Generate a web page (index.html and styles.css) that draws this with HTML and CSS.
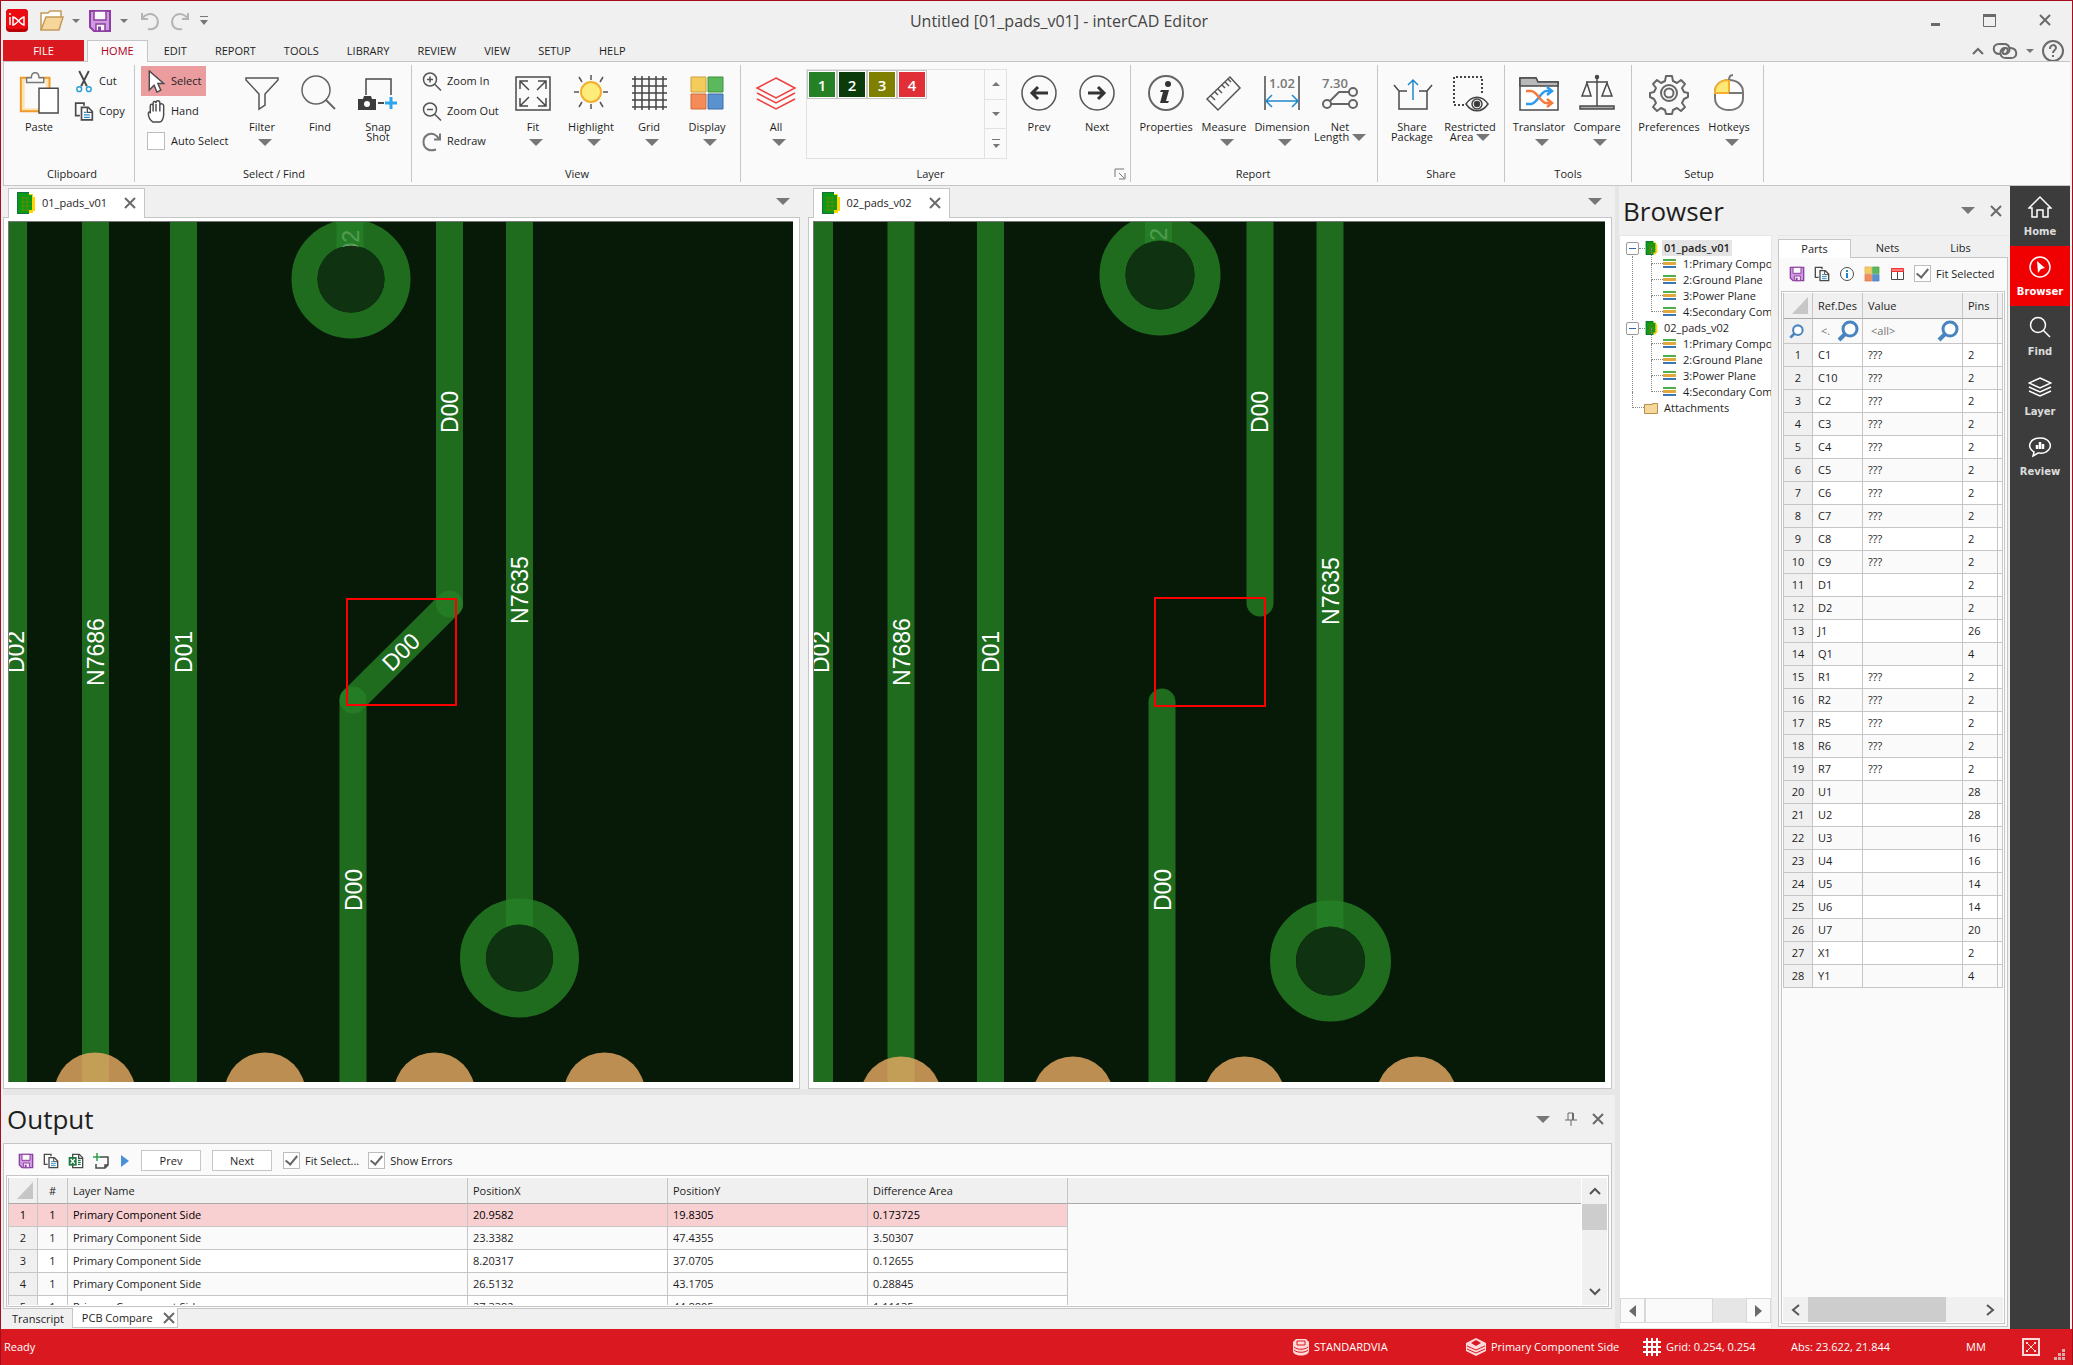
FILE: index.html
```html
<!DOCTYPE html>
<html lang="en">

<head>
    <meta charset="utf-8">
    <meta name="viewport" content="width=device-width, initial-scale=1.0">
    <title>Untitled [01_pads_v01] - interCAD Editor</title>
    <link rel="stylesheet" href="styles.css">
</head>

<body>
    <!-- icons that are used more than once -->
    <svg class="sprite" width="0" height="0" aria-hidden="true">
        <symbol id="i-save" viewBox="0 0 24 24">
            <path d="M2 2h20v20H6l-4-4z" fill="#cf9ae0" stroke="#8e3fa3" stroke-width="2" />
            <path d="M6 2h12v9H6z" fill="#fafafa" stroke="#8e3fa3" stroke-width="1.5" />
            <path d="M8 15h9v7H8z" fill="#fafafa" stroke="#8e3fa3" stroke-width="1.5" />
            <path d="M10 17.5h3V22h-3z" fill="#8e3fa3" />
        </symbol>
        <symbol id="i-copy" viewBox="0 0 24 24">
            <path d="M7 17H2V2h10v3" fill="none" stroke="#4a4a4a" stroke-width="2" />
            <path d="M9 7h8l5 5v10H9z" fill="#fff" stroke="#4a4a4a" stroke-width="2" />
            <path d="M16 7v6h6" fill="none" stroke="#4a4a4a" stroke-width="1.5" />
            <path d="M12 13h3M12 16h7M12 19h7" stroke="#2a8fd0" stroke-width="1.5" />
        </symbol>
        <symbol id="i-pcb" viewBox="0 0 18 22">
            <path d="M10 2h6v3h2v14h-2v2h-6z" fill="#ffd400" />
            <path d="M0 0h12v3h3v15h-3v4H0z" fill="#0a9a18" />
            <path d="M0 0h12v1H0zM0 21h12v1H0zM0 0h1v22H0z" fill="#17703f" />
            <path d="M4 6h8M4 10h10M4 14h10M4 18h8M6 5v14M10 5v14" stroke="#5f8a00" stroke-width="1" />
        </symbol>
        <symbol id="i-layer" viewBox="0 0 13 10">
            <path d="M0 0h13v2H0z" fill="#4cae4c" />
            <path d="M0 3h13v3H0z" fill="#e0a93c" />
            <path d="M0 7h13v2H0z" fill="#3d76b5" />
        </symbol>
        <symbol id="i-caret" viewBox="0 0 14 7">
            <path d="M0 0h14L7 7z" fill="#777" />
        </symbol>
        <symbol id="i-close" viewBox="0 0 12 12">
            <path d="M1 1l10 10M11 1L1 11" fill="none" stroke="#6a6a6a" stroke-width="2" />
        </symbol>
        <symbol id="i-squares" viewBox="0 0 36 36">
            <path d="M2 2h15v15H2z" fill="#f3cc5c" stroke="#c9a03a" />
            <path d="M19 2h15v15H19z" fill="#5cb85c" stroke="#3c923c" />
            <path d="M2 19h15v15H2z" fill="#f58b58" stroke="#cf683a" />
            <path d="M19 19h15v15H19z" fill="#5a92cf" stroke="#3a6da8" />
        </symbol>
        <symbol id="i-lens" viewBox="0 0 22 22">
            <circle cx="13" cy="9" r="7" fill="#fff" stroke="#4a84c0" stroke-width="3" />
            <path d="M8 14l-6 6" stroke="#4a84c0" stroke-width="4" />
        </symbol>
        <symbol id="i-excel" viewBox="0 0 24 24">
            <path d="M7 2h10l5 5v15H7z" fill="#fff" stroke="#4a4a4a" stroke-width="2" />
            <path d="M16 2v6h6" fill="none" stroke="#4a4a4a" stroke-width="2" />
            <path d="M1 6h12v13H1z" fill="#1f7a45" />
            <path d="M4 9l6 7M10 9l-6 7" stroke="#fff" stroke-width="2" />
            <path d="M15 11h4M15 14h4M15 17h4" stroke="#1f7a45" stroke-width="2" />
        </symbol>
    </svg>

    <header class="titlebar">
        <div class="quick">
            <svg class="logo" width="22" height="23" viewBox="0 0 22 23">
                <rect width="22" height="23" rx="4" fill="#b80006" />
                <rect width="22" height="20" rx="4" fill="#ea0a10" />
                <path d="M4 8v8M7 8v8c3 0 8-8 11-8v8c-3 0-8-8-11-8z" fill="none" stroke="#fff" stroke-width="1.5" />
                <circle cx="4" cy="5" r="1" fill="#fff" />
            </svg>
            <button class="tool" aria-label="Open">
                <svg width="24" height="22" viewBox="0 0 24 22">
                    <path d="M1 20V3h7l2-2h11v6" fill="#fff" stroke="#c49a58" stroke-width="1.5" />
                    <path d="M1 20L6 7h17l-4 13z" fill="#f5d79b" stroke="#c49a58" stroke-width="1.5" />
                </svg>
            </button>
            <button class="tool drop" aria-label="Open recent"><svg width="8" height="4"><use href="#i-caret" /></svg></button>
            <button class="tool" aria-label="Save"><svg width="24" height="24"><use href="#i-save" /></svg></button>
            <button class="tool drop" aria-label="Save options"><svg width="8" height="4"><use href="#i-caret" /></svg></button>
            <button class="tool undo" aria-label="Undo">
                <svg width="20" height="20" viewBox="0 0 20 20">
                    <path d="M2 2v6h6M2 8c3-5 8-6 12-4 5 3 5 10 1 13-2 1-4 2-7 1" fill="none" stroke="#b4b4b4" stroke-width="2" />
                </svg>
            </button>
            <button class="tool redo" aria-label="Redo">
                <svg width="20" height="20" viewBox="0 0 20 20">
                    <path d="M18 2v6h-6M18 8c-3-5-8-6-12-4-5 3-5 10-1 13 2 1 4 2 7 1" fill="none" stroke="#b4b4b4" stroke-width="2" />
                </svg>
            </button>
            <button class="tool" aria-label="Customize toolbar">
                <svg width="8" height="9" viewBox="0 0 8 9">
                    <path d="M0 0h8v1H0zM0 4h8L4 9z" fill="#777" />
                </svg>
            </button>
        </div>
        <h1>Untitled [01_pads_v01] - interCAD Editor</h1>
        <div class="window-buttons">
            <button aria-label="Minimize"><svg width="12" height="12"><path d="M2 9h9v3H2z" fill="#6a6a6a" /></svg></button>
            <button aria-label="Maximize">
                <svg width="14" height="14"><path d="M0.5 0.5h12v12h-12z" fill="none" stroke="#6a6a6a" /><path d="M0 0h13v3H0z" fill="#6a6a6a" /></svg>
            </button>
            <button aria-label="Close"><svg width="12" height="12"><use href="#i-close" /></svg></button>
        </div>
    </header>

    <nav class="menu">
        <button class="file">FILE</button>
        <a class="current" href="#home">HOME</a>
        <a href="#edit">EDIT</a>
        <a href="#report">REPORT</a>
        <a href="#tools">TOOLS</a>
        <a href="#library">LIBRARY</a>
        <a href="#review">REVIEW</a>
        <a href="#view">VIEW</a>
        <a href="#setup">SETUP</a>
        <a href="#help">HELP</a>
        <div class="menu-right">
            <button class="tool" aria-label="Collapse ribbon">
                <svg width="12" height="8"><path d="M1 7l5-5 5 5" fill="none" stroke="#6a6a6a" stroke-width="2" /></svg>
            </button>
            <button class="tool" aria-label="Connection">
                <svg width="26" height="20" viewBox="0 0 26 20" fill="none" stroke="#6a6a6a" stroke-width="2">
                    <path d="M9 13H7c-7-1-7-10 0-10h5c7 0 7 9 2 10h-2c-2-1-2-4 1-5" />
                    <path d="M18 7h1c7 1 7 10 0 10h-5c-7 0-7-8-2-10h2c3 1 2 4 0 5" />
                </svg>
            </button>
            <button class="tool" aria-label="Connection options"><svg width="8" height="4"><use href="#i-caret" /></svg></button>
            <button class="tool" aria-label="Help">
                <svg width="22" height="22" viewBox="0 0 22 22" fill="none" stroke="#6a6a6a">
                    <circle cx="11" cy="11" r="10" stroke-width="2" />
                    <path d="M8 9c0-5 6-5 6-1 0 2-3 2-3 5" stroke-width="2" />
                    <path d="M11 15v2" stroke-width="2" />
                </svg>
            </button>
        </div>
    </nav>

    <section class="ribbon">
        <div class="group clipboard">
            <div class="controls">
                <button class="big">
                    <svg viewBox="0 0 44 46">
                        <path d="M3 7h30v35H3z" fill="#fde3ae" stroke="#f09a2c" stroke-width="2" />
                        <path d="M7 10h22v29H7z" fill="#fafafa" />
                        <path d="M9 7h5c0-7 8-7 8 0h5v5H9z" fill="#fafafa" stroke="#777" stroke-width="1.5" />
                        <path d="M22 18h20v26H22z" fill="#fff" stroke="#4a4a4a" stroke-width="1.5" />
                    </svg>
                    <span>Paste</span>
                </button>
                <div class="stack">
                    <button class="small">
                        <svg viewBox="0 0 20 24" fill="none">
                            <path d="M5 1l8 16M15 1L7 17" stroke="#4a4a4a" stroke-width="2" />
                            <circle cx="5" cy="20" r="2.5" stroke="#2a9fd8" stroke-width="1.5" />
                            <circle cx="15" cy="20" r="2.5" stroke="#2a9fd8" stroke-width="1.5" />
                        </svg>Cut
                    </button>
                    <button class="small"><svg><use href="#i-copy" /></svg>Copy</button>
                </div>
            </div>
            <h2>Clipboard</h2>
        </div>

        <div class="group select">
            <div class="controls">
                <div class="stack">
                    <button class="small pressed">
                        <svg viewBox="0 0 20 24">
                            <path d="M3 1v20l5-5 3 7 4-2-3-7h6z" fill="#fff" stroke="#4a4a4a" stroke-width="1.5" />
                        </svg>Select
                    </button>
                    <button class="small">
                        <svg viewBox="0 0 20 24">
                            <path d="M4 14V6c0-2 3-2 3 0V3c0-2 3-2 3 0 0-3 4-3 4 0v2c1-2 4-1 4 1v9c0 4-2 8-4 8H7c-3-2-5-6-5-9 0-2 2-2 2 0zM7 6v6M10 4v8M14 5v7" fill="#fff" stroke="#4a4a4a" stroke-width="1.5" />
                        </svg>Hand
                    </button>
                    <label class="small"><input type="checkbox" class="check large">Auto Select</label>
                </div>
                <button class="big">
                    <svg viewBox="0 0 44 44"><path d="M6 7h32v2L25 23v11l-6 4V23L6 9z" fill="none" stroke="#555" stroke-width="1.5" /></svg>
                    <span>Filter</span><svg class="caret"><use href="#i-caret" /></svg>
                </button>
                <button class="big">
                    <svg viewBox="0 0 44 44" fill="none" stroke="#666"><circle cx="18" cy="19" r="14" stroke-width="1.5" /><path d="M28 29l9 9" stroke-width="2" /></svg>
                    <span>Find</span>
                </button>
                <button class="big">
                    <svg viewBox="0 0 44 44">
                        <path d="M10 24V8h25v16" fill="none" stroke="#4a4a4a" stroke-width="1.5" />
                        <path d="M2 28h5l1-3h7l1 3h4v11H2z" fill="#3c3c3c" /><circle cx="11" cy="33" r="3" fill="#fafafa" />
                        <path d="M22 32h6" stroke="#4a4a4a" stroke-width="2" />
                        <path d="M29 32h12M35 26v12" stroke="#2ba6ee" stroke-width="3" />
                    </svg>
                    <span>Snap<br>Shot</span>
                </button>
            </div>
            <h2>Select / Find</h2>
        </div>

        <div class="group view">
            <div class="controls">
                <div class="stack">
                    <button class="small">
                        <svg viewBox="0 0 20 20" fill="none" stroke="#555" stroke-width="1.5"><circle cx="8" cy="8" r="6.5" /><path d="M13 13l6 6M5 8h6M8 5v6" /></svg>Zoom In
                    </button>
                    <button class="small">
                        <svg viewBox="0 0 20 20" fill="none" stroke="#555" stroke-width="1.5"><circle cx="8" cy="8" r="6.5" /><path d="M13 13l6 6M5 8h6" /></svg>Zoom Out
                    </button>
                    <button class="small">
                        <svg viewBox="0 0 20 20" fill="none" stroke="#777" stroke-width="2"><path d="M18 2v6h-6M17 8c-2-5-7-7-11-5-6 3-6 12 0 15 2 1 5 1 8 0" /></svg>Redraw
                    </button>
                </div>
                <button class="big">
                    <svg viewBox="0 0 44 44" fill="none" stroke="#4a4a4a" stroke-width="1.5">
                        <path d="M5 6h34v33H5z" />
                        <path d="M9 18v-8h8M9 10l9 9M35 18v-8h-8M35 10l-9 9M9 27v8h8M9 35l9-9M35 27v8h-8M35 35l-9-9" />
                    </svg>
                    <span>Fit</span><svg class="caret"><use href="#i-caret" /></svg>
                </button>
                <button class="big">
                    <svg viewBox="0 0 44 44">
                        <circle cx="22" cy="21" r="10" fill="#fdec7a" stroke="#f5ae2d" stroke-width="2" />
                        <path d="M22 4v5M22 33v5M5 21h5M34 21h5M10 6l3 5M34 6l-3 5M10 36l3-5M34 36l-3-5" stroke="#555" stroke-width="1.5" />
                    </svg>
                    <span>Highlight</span><svg class="caret"><use href="#i-caret" /></svg>
                </button>
                <button class="big">
                    <svg viewBox="0 0 44 44"><path d="M5 8h35M5 15h35M5 22h35M5 29h35M5 36h35M8 5v34M15 5v34M22 5v34M29 5v34M36 5v34" stroke="#444" stroke-width="1.5" /></svg>
                    <span>Grid</span><svg class="caret"><use href="#i-caret" /></svg>
                </button>
                <button class="big">
                    <svg viewBox="-4 -4 44 44"><use href="#i-squares" width="36" height="36" /></svg>
                    <span>Display</span><svg class="caret"><use href="#i-caret" /></svg>
                </button>
            </div>
            <h2>View</h2>
        </div>

        <div class="group layer">
            <div class="controls">
                <button class="big">
                    <svg viewBox="0 0 44 44" fill="none" stroke="#ee4040" stroke-width="1.5">
                        <path d="M22 7l19 10-19 10L3 17zM3 22l19 10 19-10M3 28l19 10 19-10" />
                    </svg>
                    <span>All</span><svg class="caret"><use href="#i-caret" /></svg>
                </button>
                <div class="gallery">
                    <div class="swatches">
                        <button class="swatch green">1</button>
                        <button class="swatch dark">2</button>
                        <button class="swatch olive">3</button>
                        <button class="swatch red">4</button>
                    </div>
                    <div class="gallery-nav">
                        <button aria-label="Scroll up"><svg width="8" height="4"><path d="M0 4h8L4 0z" fill="#777" /></svg></button>
                        <button aria-label="Scroll down"><svg width="8" height="4"><use href="#i-caret" /></svg></button>
                        <button aria-label="More layers"><svg width="8" height="9"><path d="M0 0h8v1H0zM1 5h7L4 9z" fill="#777" /></svg></button>
                    </div>
                </div>
                <button class="big prev-layer">
                    <svg viewBox="0 0 44 44" fill="none" stroke="#555"><circle cx="22" cy="22" r="17" stroke-width="1.5" /><path d="M31 22H15M21 16l-6 6 6 6" stroke="#333" stroke-width="3" /></svg>
                    <span>Prev</span>
                </button>
                <button class="big">
                    <svg viewBox="0 0 44 44" fill="none" stroke="#555"><circle cx="22" cy="22" r="17" stroke-width="1.5" /><path d="M13 22h16M23 16l6 6-6 6" stroke="#333" stroke-width="3" /></svg>
                    <span>Next</span>
                </button>
            </div>
            <div class="group-foot">
                <h2>Layer</h2>
                <button class="tool launcher" aria-label="Layer settings">
                    <svg width="12" height="12" fill="none" stroke="#777"><path d="M1 9V1h9M5 5l5 5M11 5v6H5" /></svg>
                </button>
            </div>
        </div>

        <div class="group report">
            <div class="controls">
                <button class="big">
                    <svg viewBox="0 0 44 44">
                        <circle cx="22" cy="22" r="17" fill="none" stroke="#666" stroke-width="2" />
                        <circle cx="24" cy="13" r="3" fill="#333" />
                        <path d="M17 19h8l-3 11h3l-1 2h-8l3-11h-3z" fill="#333" />
                    </svg>
                    <span>Properties</span>
                </button>
                <button class="big">
                    <svg viewBox="0 0 44 44" fill="none" stroke="#555" stroke-width="1.5">
                        <path d="M5 28L28 6l10 11-22 22z" /><path d="M9 25l4 4M13 21l3 3M16 18l4 4M20 14l3 3M23 11l4 4M26 8l3 3" />
                    </svg>
                    <span>Measure</span><svg class="caret"><use href="#i-caret" /></svg>
                </button>
                <button class="big">
                    <svg viewBox="0 0 44 44" fill="none">
                        <path d="M5 5v34M39 5v34" stroke="#4a4a4a" stroke-width="1.5" />
                        <text x="22" y="17" class="icon-text">1.02</text>
                        <path d="M6 30h32M12 24l-6 6 6 6M32 24l6 6-6 6" stroke="#1e88cc" stroke-width="1.5" />
                    </svg>
                    <span>Dimension</span><svg class="caret"><use href="#i-caret" /></svg>
                </button>
                <button class="big">
                    <svg viewBox="0 0 44 44" fill="none" stroke="#666" stroke-width="2">
                        <text x="17" y="17" class="icon-text">7.30</text>
                        <circle cx="9" cy="33" r="4" /><circle cx="35" cy="33" r="4" /><circle cx="35" cy="21" r="4" />
                        <path d="M13 33h18M12 30l9-9h10" />
                    </svg>
                    <span>Net<br>Length <svg class="caret"><use href="#i-caret" /></svg></span>
                </button>
            </div>
            <h2>Report</h2>
        </div>

        <div class="group share">
            <div class="controls">
                <button class="big">
                    <svg viewBox="0 0 44 44" fill="none" stroke="#4a4a4a" stroke-width="1.5">
                        <path d="M17 20H9v18h28V20h-8M9 20l-5-6M37 20l5-6" />
                        <path d="M23 29V9M18 14l5-5 5 5" stroke="#1e88cc" stroke-width="1.5" />
                    </svg>
                    <span>Share<br>Package</span>
                </button>
                <button class="big">
                    <svg viewBox="0 0 44 44" fill="none" stroke="#444" stroke-width="1.5">
                        <path d="M16 34H6V6h28v17" stroke-dasharray="2 2" stroke-width="2" />
                        <path d="M18 33c6-9 16-9 22 0-6 9-16 9-22 0z" fill="#fafafa" />
                        <circle cx="29" cy="33" r="5" /><circle cx="29" cy="33" r="2.5" fill="#333" />
                    </svg>
                    <span>Restricted<br>Area <svg class="caret"><use href="#i-caret" /></svg></span>
                </button>
            </div>
            <h2>Share</h2>
        </div>

        <div class="group tools">
            <div class="controls">
                <button class="big">
                    <svg viewBox="0 0 44 44" fill="none" stroke="#4a4a4a" stroke-width="1.5">
                        <path d="M3 39V7h16l2 4h20v28z" fill="#fff" /><path d="M3 7h16l2 4h20v4H3z" fill="#b9b9b9" />
                        <path d="M9 33h5c6 0 10-13 15-13h5M30 16l5 4-5 4" stroke="#2a9bf0" stroke-width="2.5" />
                        <path d="M9 20h5c6 0 10 12 15 12h5M30 28l5 4-5 4" stroke="#f57a3c" stroke-width="2.5" />
                    </svg>
                    <span>Translator</span><svg class="caret"><use href="#i-caret" /></svg>
                </button>
                <button class="big">
                    <svg viewBox="0 0 44 44" fill="none" stroke="#4a4a4a" stroke-width="1.5">
                        <circle cx="22" cy="6" r="1.5" fill="#333" />
                        <path d="M22 5v30M11 11h22" /><path d="M12 12L7 25h9zM32 12l-5 13h10z" />
                        <path d="M5 35h34v3H5z" fill="#aaa" />
                    </svg>
                    <span>Compare</span><svg class="caret"><use href="#i-caret" /></svg>
                </button>
            </div>
            <h2>Tools</h2>
        </div>

        <div class="group setup">
            <div class="controls">
                <button class="big">
                    <svg viewBox="0 0 44 44" fill="none" stroke="#666" stroke-width="2" stroke-linejoin="round">
                        <path d="M19 5h6l1 5 4 2 4-3 4 4-3 4 2 4 4 1v4l-4 2-2 4 3 4-4 4-4-3-4 2-1 4h-6l-1-4-4-2-4 3-4-4 3-4-2-4-4-2v-4l4-1 2-4-3-4 4-4 4 3 4-2z" />
                        <circle cx="22" cy="22" r="8" /><circle cx="22" cy="22" r="4.5" />
                    </svg>
                    <span>Preferences</span>
                </button>
                <button class="big">
                    <svg viewBox="0 0 44 44" fill="none" stroke="#777" stroke-width="2">
                        <path d="M22 9c8 0 14 5 14 12v6c0 7-5 12-14 12S8 34 8 27v-6C8 14 14 9 22 9z" fill="#fff" />
                        <path d="M22 9v13H8v-1C8 14 13 9 22 9z" fill="#fde873" stroke="#f5ae2d" />
                        <path d="M22 22h14M22 9c0-3 1-5 4-5" />
                    </svg>
                    <span>Hotkeys</span><svg class="caret"><use href="#i-caret" /></svg>
                </button>
            </div>
            <h2>Setup</h2>
        </div>
    </section>

    <main class="workspace">
        <div class="center">
            <div class="documents">
                <section class="document">
                    <div class="doc-tabs">
                        <div class="doc-tab">
                            <svg class="pcb" width="18" height="22"><use href="#i-pcb" /></svg>
                            <a href="#pads1">01_pads_v01</a>
                            <button class="tool" aria-label="Close 01_pads_v01"><svg width="12" height="12"><use href="#i-close" /></svg></button>
                        </div>
                        <button class="tool" aria-label="Documents"><svg width="14" height="7"><use href="#i-caret" /></svg></button>
                    </div>
                    <div class="doc-frame">
                        <svg class="board" role="img" aria-label="01_pads_v01 board">
                            <g class="trace">
                                <path d="M4.5 0V900M86.5 0V900M174.5 0V900" />
                                <path class="round" d="M440.5 -20V382" />
                                <path class="round" d="M440.5 382L344 478" />
                                <path class="round" d="M344 478V900" />
                                <path d="M510.5 0V736M341 0V57" />
                            </g>
                            <text transform="translate(342 29) rotate(-90)">D02</text>
                            <g class="via">
                                <circle class="ring" cx="342" cy="57" r="46.5" /><circle class="hole" cx="342" cy="57" r="33.5" />
                                <circle class="ring" cx="510.5" cy="736" r="46.5" /><circle class="hole" cx="510.5" cy="736" r="33.5" />
                            </g>
                            <g class="pad">
                                <circle cx="86" cy="871" r="40.5" /><circle cx="256" cy="871" r="40.5" />
                                <circle cx="425.5" cy="871" r="40.5" /><circle cx="595.5" cy="871" r="40.5" />
                            </g>
                            <text transform="translate(7 430) rotate(-90)">D02</text>
                            <text transform="translate(87 430) rotate(-90)">N7686</text>
                            <text transform="translate(175 430) rotate(-90)">D01</text>
                            <text transform="translate(441 190) rotate(-90)">D00</text>
                            <text transform="translate(511 368) rotate(-90)">N7635</text>
                            <text transform="translate(345 668) rotate(-90)">D00</text>
                            <text transform="translate(392 430) rotate(-45)">D00</text>
                            <rect class="error" x="338" y="377" width="109" height="106" />
                        </svg>
                    </div>
                </section>
                <section class="document">
                    <div class="doc-tabs">
                        <div class="doc-tab">
                            <svg class="pcb" width="18" height="22"><use href="#i-pcb" /></svg>
                            <a href="#pads2">02_pads_v02</a>
                            <button class="tool" aria-label="Close 02_pads_v02"><svg width="12" height="12"><use href="#i-close" /></svg></button>
                        </div>
                        <button class="tool" aria-label="Documents"><svg width="14" height="7"><use href="#i-caret" /></svg></button>
                    </div>
                    <div class="doc-frame">
                        <svg class="board" role="img" aria-label="02_pads_v02 board">
                            <g class="trace">
                                <path d="M5.5 0V900M87 0V900M176.5 0V900" />
                                <path class="round" d="M446 -20V381" />
                                <path class="round" d="M348 480V900" />
                                <path d="M516 0V739M344.5 0V53" />
                            </g>
                            <text transform="translate(345 27) rotate(-90)">D02</text>
                            <g class="via">
                                <circle class="ring" cx="346" cy="53" r="47.5" /><circle class="hole" cx="346" cy="53" r="34.5" />
                                <circle class="ring" cx="516.5" cy="739" r="47.5" /><circle class="hole" cx="516.5" cy="739" r="34.5" />
                            </g>
                            <g class="pad">
                                <circle cx="87" cy="875" r="40.5" /><circle cx="259" cy="875" r="40.5" />
                                <circle cx="430.5" cy="875" r="40.5" /><circle cx="602.5" cy="875" r="40.5" />
                            </g>
                            <text transform="translate(7 430) rotate(-90)">D02</text>
                            <text transform="translate(88 430) rotate(-90)">N7686</text>
                            <text transform="translate(177 430) rotate(-90)">D01</text>
                            <text transform="translate(446 190) rotate(-90)">D00</text>
                            <text transform="translate(517 369) rotate(-90)">N7635</text>
                            <text transform="translate(349 668) rotate(-90)">D00</text>
                            <rect class="error" x="341" y="376" width="110" height="108" />
                        </svg>
                    </div>
                </section>
            </div>

            <section class="output">
                <div class="panel-head">
                    <h2>Output</h2>
                    <div class="panel-buttons">
                        <button class="tool" aria-label="Output menu"><svg width="14" height="7"><use href="#i-caret" /></svg></button>
                        <button class="tool" aria-label="Pin output">
                            <svg width="12" height="14" fill="none" stroke="#6a6a6a"><path d="M3 8V1h5v7M0 8h12M6 8v6" /><path d="M8 1v7" stroke-width="2" /></svg>
                        </button>
                        <button class="tool" aria-label="Close output"><svg width="12" height="12"><use href="#i-close" /></svg></button>
                    </div>
                </div>
                <div class="output-body">
                    <div class="toolbar">
                        <button class="tool" aria-label="Save results"><svg width="16" height="16"><use href="#i-save" /></svg></button>
                        <button class="tool" aria-label="Copy results"><svg width="16" height="16"><use href="#i-copy" /></svg></button>
                        <button class="tool" aria-label="Export to Excel"><svg width="16" height="16"><use href="#i-excel" /></svg></button>
                        <button class="tool" aria-label="Add frame">
                            <svg width="16" height="16" fill="none"><path d="M7 4h8v8l-3 3H3v-4M12 15v-3h3" stroke="#4a4a4a" stroke-width="1.5" /><path d="M4 0v8M0 4h8" stroke="#2f9e4f" stroke-width="1.5" /></svg>
                        </button>
                        <button class="tool play" aria-label="Run"><svg width="8" height="12"><path d="M0 0l8 6-8 6z" fill="#4a90d9" /></svg></button>
                        <button class="push">Prev</button>
                        <button class="push">Next</button>
                        <label><input type="checkbox" class="check" checked>Fit Select...</label>
                        <label><input type="checkbox" class="check" checked>Show Errors</label>
                    </div>
                    <div class="output-grid">
                        <div class="grid-clip">
                            <table class="grid results">
                                <colgroup>
                                    <col class="c-row"><col class="c-num"><col class="c-name"><col class="c-pos"><col class="c-pos"><col class="c-pos"><col>
                                </colgroup>
                                <thead>
                                    <tr><th class="corner"><i></i></th><th class="num">#</th><th>Layer Name</th><th>PositionX</th><th>PositionY</th><th>Difference Area</th><th class="rest"></th></tr>
                                </thead>
                                <tbody>
                                    <tr class="selected"><th>1</th><td class="num">1</td><td>Primary Component Side</td><td>20.9582</td><td>19.8305</td><td>0.173725</td><td class="rest"></td></tr>
                                    <tr><th>2</th><td class="num">1</td><td>Primary Component Side</td><td>23.3382</td><td>47.4355</td><td>3.50307</td><td class="rest"></td></tr>
                                    <tr><th>3</th><td class="num">1</td><td>Primary Component Side</td><td>8.20317</td><td>37.0705</td><td>0.12655</td><td class="rest"></td></tr>
                                    <tr><th>4</th><td class="num">1</td><td>Primary Component Side</td><td>26.5132</td><td>43.1705</td><td>0.28845</td><td class="rest"></td></tr>
                                    <tr><th>5</th><td class="num">1</td><td>Primary Component Side</td><td>27.3382</td><td>44.8805</td><td>1.11135</td><td class="rest"></td></tr>
                                </tbody>
                            </table>
                        </div>
                        <div class="scroll-v">
                            <button aria-label="Scroll up"><svg width="12" height="8"><path d="M1 7l5-5 5 5" fill="none" stroke="#555" stroke-width="2" /></svg></button>
                            <div class="thumb"></div>
                            <button aria-label="Scroll down"><svg width="12" height="8"><path d="M1 1l5 5 5-5" fill="none" stroke="#555" stroke-width="2" /></svg></button>
                        </div>
                    </div>
                </div>
                <div class="output-tabs">
                    <a href="#transcript">Transcript</a>
                    <div class="active">
                        <a href="#compare">PCB Compare</a>
                        <button class="tool" aria-label="Close PCB Compare"><svg width="12" height="12"><use href="#i-close" /></svg></button>
                    </div>
                </div>
            </section>
        </div>

        <div class="splitter"></div>

        <section class="browser">
            <div class="panel-head">
                <h2>Browser</h2>
                <div class="panel-buttons">
                    <button class="tool" aria-label="Browser menu"><svg width="14" height="7"><use href="#i-caret" /></svg></button>
                    <button class="tool" aria-label="Close browser"><svg width="12" height="12"><use href="#i-close" /></svg></button>
                </div>
            </div>
            <div class="browser-body">
                <div class="tree-panel">
                    <ul class="tree">
                        <li>
                            <div class="node"><button class="expander" aria-label="Collapse"></button><i class="dots"></i><svg width="13" height="14"><use href="#i-pcb" /></svg><span class="chosen">01_pads_v01</span></div>
                            <ul>
                                <li><i class="branch"></i><svg width="13" height="10"><use href="#i-layer" /></svg>1:Primary Component Side</li>
                                <li><i class="branch"></i><svg width="13" height="10"><use href="#i-layer" /></svg>2:Ground Plane</li>
                                <li><i class="branch"></i><svg width="13" height="10"><use href="#i-layer" /></svg>3:Power Plane</li>
                                <li><i class="branch"></i><svg width="13" height="10"><use href="#i-layer" /></svg>4:Secondary Component Side</li>
                            </ul>
                        </li>
                        <li>
                            <div class="node"><button class="expander" aria-label="Collapse"></button><i class="dots"></i><svg width="13" height="14"><use href="#i-pcb" /></svg><span>02_pads_v02</span></div>
                            <ul>
                                <li><i class="branch"></i><svg width="13" height="10"><use href="#i-layer" /></svg>1:Primary Component Side</li>
                                <li><i class="branch"></i><svg width="13" height="10"><use href="#i-layer" /></svg>2:Ground Plane</li>
                                <li><i class="branch"></i><svg width="13" height="10"><use href="#i-layer" /></svg>3:Power Plane</li>
                                <li><i class="branch"></i><svg width="13" height="10"><use href="#i-layer" /></svg>4:Secondary Component Side</li>
                            </ul>
                        </li>
                        <li class="leaf"><i class="branch"></i><svg width="14" height="11" viewBox="0 0 14 11"><path d="M0.5 1.5h8v-1h5v10H0.5z" fill="#f3d79b" stroke="#b98f4a" /></svg>Attachments</li>
                    </ul>
                    <div class="scroll-h boxed">
                        <button aria-label="Scroll left"><svg width="7" height="12"><path d="M7 0v12L0 6z" fill="#6a6a6a" /></svg></button>
                        <div class="thumb"></div>
                        <button aria-label="Scroll right"><svg width="7" height="12"><path d="M0 0v12l7-6z" fill="#6a6a6a" /></svg></button>
                    </div>
                </div>

                <div class="parts-panel">
                    <div class="parts-tabs">
                        <a class="active" href="#parts">Parts</a>
                        <a href="#nets">Nets</a>
                        <a href="#libs">Libs</a>
                    </div>
                    <div class="parts-body">
                        <div class="toolbar">
                            <button class="tool" aria-label="Save parts"><svg width="16" height="16"><use href="#i-save" /></svg></button>
                            <button class="tool" aria-label="Copy parts"><svg width="16" height="16"><use href="#i-copy" /></svg></button>
                            <button class="tool" aria-label="Part info">
                                <svg width="16" height="16"><circle cx="8" cy="8" r="6.5" fill="#fff" stroke="#4a4a4a" /><path d="M7 4h2v2H7zM7 7h2v5H7z" fill="#1e88cc" /></svg>
                            </button>
                            <button class="tool" aria-label="Colors"><svg width="16" height="16"><use href="#i-squares" /></svg></button>
                            <button class="tool" aria-label="Columns">
                                <svg width="16" height="16" fill="none" stroke="#4a4a4a"><path d="M2.5 5v8.5h12V5M8.5 5v8" fill="#fff" /><path d="M2.5 2.5h12v3h-12z" fill="#f77" stroke="#e33" /></svg>
                            </button>
                            <label><input type="checkbox" class="check" checked>Fit Selected</label>
                        </div>
                        <div class="parts-grid">
                            <div class="grid-clip">
                                <table class="grid parts">
                                    <colgroup><col class="c-row"><col class="c-ref"><col class="c-value"><col class="c-pins"><col></colgroup>
                                    <thead>
                                        <tr><th class="corner"><i></i></th><th>Ref.Des</th><th>Value</th><th>Pins</th><th></th></tr>
                                    </thead>
                                    <tbody>
                                        <tr class="filters">
                                            <th><svg width="15" height="15"><use href="#i-lens" /></svg></th>
                                            <td><div><input type="text" placeholder="&lt;." aria-label="Filter Ref.Des"><svg width="22" height="22"><use href="#i-lens" /></svg></div></td>
                                            <td><div><input type="text" placeholder="&lt;all&gt;" aria-label="Filter Value"><svg width="22" height="22"><use href="#i-lens" /></svg></div></td>
                                            <td></td><td></td>
                                        </tr>
                                        <tr><th>1</th><td>C1</td><td>???</td><td>2</td><td></td></tr>
                                        <tr><th>2</th><td>C10</td><td>???</td><td>2</td><td></td></tr>
                                        <tr><th>3</th><td>C2</td><td>???</td><td>2</td><td></td></tr>
                                        <tr><th>4</th><td>C3</td><td>???</td><td>2</td><td></td></tr>
                                        <tr><th>5</th><td>C4</td><td>???</td><td>2</td><td></td></tr>
                                        <tr><th>6</th><td>C5</td><td>???</td><td>2</td><td></td></tr>
                                        <tr><th>7</th><td>C6</td><td>???</td><td>2</td><td></td></tr>
                                        <tr><th>8</th><td>C7</td><td>???</td><td>2</td><td></td></tr>
                                        <tr><th>9</th><td>C8</td><td>???</td><td>2</td><td></td></tr>
                                        <tr><th>10</th><td>C9</td><td>???</td><td>2</td><td></td></tr>
                                        <tr><th>11</th><td>D1</td><td></td><td>2</td><td></td></tr>
                                        <tr><th>12</th><td>D2</td><td></td><td>2</td><td></td></tr>
                                        <tr><th>13</th><td>J1</td><td></td><td>26</td><td></td></tr>
                                        <tr><th>14</th><td>Q1</td><td></td><td>4</td><td></td></tr>
                                        <tr><th>15</th><td>R1</td><td>???</td><td>2</td><td></td></tr>
                                        <tr><th>16</th><td>R2</td><td>???</td><td>2</td><td></td></tr>
                                        <tr><th>17</th><td>R5</td><td>???</td><td>2</td><td></td></tr>
                                        <tr><th>18</th><td>R6</td><td>???</td><td>2</td><td></td></tr>
                                        <tr><th>19</th><td>R7</td><td>???</td><td>2</td><td></td></tr>
                                        <tr><th>20</th><td>U1</td><td></td><td>28</td><td></td></tr>
                                        <tr><th>21</th><td>U2</td><td></td><td>28</td><td></td></tr>
                                        <tr><th>22</th><td>U3</td><td></td><td>16</td><td></td></tr>
                                        <tr><th>23</th><td>U4</td><td></td><td>16</td><td></td></tr>
                                        <tr><th>24</th><td>U5</td><td></td><td>14</td><td></td></tr>
                                        <tr><th>25</th><td>U6</td><td></td><td>14</td><td></td></tr>
                                        <tr><th>26</th><td>U7</td><td></td><td>20</td><td></td></tr>
                                        <tr><th>27</th><td>X1</td><td></td><td>2</td><td></td></tr>
                                        <tr><th>28</th><td>Y1</td><td></td><td>4</td><td></td></tr>
                                    </tbody>
                                </table>
                            </div>
                            <div class="scroll-h">
                                <button aria-label="Scroll left"><svg width="9" height="12"><path d="M8 1L2 6l6 5" fill="none" stroke="#555" stroke-width="2" /></svg></button>
                                <div class="thumb"></div>
                                <button aria-label="Scroll right"><svg width="9" height="12"><path d="M1 1l6 5-6 5" fill="none" stroke="#555" stroke-width="2" /></svg></button>
                            </div>
                        </div>
                    </div>
                </div>
            </div>
        </section>

        <nav class="sidebar">
            <a href="#home"><svg viewBox="0 0 24 24"><path d="M1 13L12 2l11 11h-3v9h-5v-7H9v7H4v-9z" /></svg>Home</a>
            <a class="active" href="#browser"><svg viewBox="0 0 24 24"><circle cx="12" cy="12" r="10" /><path d="M9 6l8 7-4 1-3 4z" fill="#fff" stroke="none" /></svg>Browser</a>
            <a href="#find"><svg viewBox="0 0 24 24"><circle cx="10" cy="10" r="7.5" /><path d="M15 15l7 7" /></svg>Find</a>
            <a href="#layer"><svg viewBox="0 0 24 24"><path d="M12 3l11 5-11 5L1 8zM1 12l11 5 11-5M1 16l11 5 11-5" /></svg>Layer</a>
            <a href="#review"><svg viewBox="0 0 24 24"><path d="M6 17C-2 12 2 3 12 3s14 9 6 14c-3 2-6 1-8 1l-5 3z" /><path d="M9 14v-4M12 14V7M15 14V9" stroke-width="2.5" /></svg>Review</a>
        </nav>
    </main>

    <footer class="status">
        <span class="ready">Ready</span>
        <span class="via-name">
            <svg width="16" height="18" viewBox="0 0 16 18" fill="#ffd9d9"><path d="M3 1h10l3 3v9c0 6-16 6-16 0V4z" /><path d="M4 3h8v4H4z" fill="none" stroke="#d9191f" /><path d="M1 9c3 3 11 3 14 0M1 12c3 3 11 3 14 0" fill="none" stroke="#d9191f" /></svg>STANDARDVIA
        </span>
        <span class="layer-name">
            <svg width="20" height="18" viewBox="0 0 20 18" fill="#ffd9d9"><path d="M10 0l10 5v8l-10 5-10-5V5z" /><path d="M10 2l5 3-5 3-5-3z" fill="#d9191f" /><path d="M1 8l9 4 9-4M1 11l9 4 9-4" fill="none" stroke="#d9191f" /></svg>Primary Component Side
        </span>
        <span class="grid-size">
            <svg width="18" height="18" stroke="#fff" stroke-width="2"><path d="M0 4h18M0 9h18M0 14h18M4 0v18M9 0v18M14 0v18" /></svg>Grid: 0.254, 0.254
        </span>
        <span class="abs">Abs: 23.622, 21.844</span>
        <span class="unit">MM</span>
        <svg class="fit-icon" width="18" height="18" fill="none" stroke="#ffd9d9" stroke-width="2"><path d="M1 1h16v16H1z" /><path d="M6 6l6 6M12 6l-6 6" stroke-width="1" /><path d="M4 5h2M12 5h2M4 13h2M12 13h2" /></svg>
        <svg class="grip" width="12" height="12" fill="#d9aaaa"><path d="M8 0h3v3H8zM4 4h3v3H4zM8 4h3v3H8zM0 8h3v3H0zM4 8h3v3H4zM8 8h3v3H8z" /></svg>
    </footer>
</body>

</html>
```

FILE: styles.css
```css
* {
    box-sizing: border-box;
    margin: 0;
    padding: 0;
}

body {
    display: flex;
    flex-direction: column;
    height: 100vh;
    overflow: hidden;
    border: 1px solid #a50c1c;
    border-bottom: 0;
    background: #f0f0f0;
    color: #1e1e1e;
    font-family: "Open Sans", "Noto Sans", sans-serif;
    font-size: 11px;
    line-height: 16px;
}

button,
input {
    font: inherit;
    color: inherit;
    border: 0;
    background: none;
}

a {
    color: inherit;
    text-decoration: none;
}

svg {
    display: block;
    flex: none;
}

.sprite {
    position: absolute;
}

.tool {
    display: flex;
    align-items: center;
    justify-content: center;
}

/* title bar */

.titlebar {
    display: flex;
    align-items: center;
    height: 39px;
}

.quick {
    display: flex;
    align-items: center;
    width: 210px;
    padding-left: 5px;
}

.logo {
    margin-right: 12px;
}

.drop {
    width: 24px;
}

.undo {
    margin-left: 4px;
}

.redo {
    margin: 0 10px;
}

h1 {
    flex: 1;
    text-align: center;
    font-size: 16px;
    font-weight: normal;
    color: #444;
}

.window-buttons {
    display: flex;
}

.window-buttons button {
    display: flex;
    justify-content: center;
    width: 55px;
}

/* menu tabs */

.menu {
    display: flex;
    height: 21px;
    margin: 0 2px;
}

.menu a,
.file {
    padding: 0 14px;
    line-height: 22px;
}

.menu .file {
    width: 81px;
    margin-right: 3px;
    background: #d9191f;
    color: #fff;
}

.menu .current {
    height: 22px;
    margin: 0 2px -1px 0;
    padding: 0 13px;
    border: 1px solid #c6c6c6;
    border-bottom: 0;
    background: #fafafa;
    color: #b00018;
    line-height: 20px;
    z-index: 1;
}

.menu-right {
    display: flex;
    align-items: center;
    gap: 8px;
    margin-left: auto;
    padding-right: 6px;
}

/* ribbon */

.ribbon {
    display: flex;
    height: 125px;
    margin: 0 2px;
    padding: 3px 0;
    border: 1px solid #c6c6c6;
    border-right: 0;
    background: #fafafa;
}

.group {
    display: flex;
    flex-direction: column;
    padding: 1px 4px 0 6px;
    border-right: 1px solid #c6c6c6;
}

.group h2 {
    flex: 1;
    font-size: 11px;
    font-weight: normal;
    text-align: center;
}

.controls {
    display: flex;
    height: 101px;
}

.clipboard {
    padding-right: 0;
}

.report {
    padding-right: 8px;
}

.share,
.tools {
    padding: 1px 5px 0;
}

.setup {
    padding: 1px 5px 0 8px;
}

.setup .controls {
    gap: 2px;
}

.big {
    display: flex;
    flex-direction: column;
    align-items: center;
    width: 58px;
    padding-top: 5px;
    line-height: 10px;
    white-space: nowrap;
}

.big > svg {
    width: 44px;
    height: 44px;
    margin-bottom: 7px;
}

.big .caret {
    width: 14px;
    height: 7px;
    margin: 7px 0 0 6px;
}

.big span .caret {
    display: inline-block;
    margin: 0;
}

.icon-text {
    font-size: 13px;
    font-weight: 600;
    text-anchor: middle;
    fill: #777;
    stroke: none;
}

.stack {
    display: flex;
    flex-direction: column;
}

.clipboard .stack {
    width: 60px;
    margin-left: 6px;
}

.select .stack {
    width: 92px;
}

.view .stack {
    width: 86px;
}

.small {
    display: flex;
    align-items: center;
    align-self: flex-start;
    gap: 5px;
    height: 30px;
    white-space: nowrap;
}

.select .small {
    padding: 0 5px;
}

.view .small {
    padding-left: 4px;
}

.small svg {
    width: 20px;
    height: 23px;
}

.pressed {
    background: #ea9c9e;
}

.check {
    display: grid;
    place-items: center;
    flex: none;
    width: 17px;
    height: 17px;
    border: 1px solid #bdbdbd;
    background: #fff;
    appearance: none;
}

.check.large {
    width: 18px;
    height: 18px;
    margin: 0 1px;
}

.check:checked::after {
    content: "";
    width: 5px;
    height: 10px;
    margin-bottom: 3px;
    border: solid #666;
    border-width: 0 2px 2px 0;
    transform: rotate(40deg);
}

.gallery {
    display: flex;
    width: 201px;
    height: 90px;
    margin: 3px 3px 0 1px;
    border: 1px solid #e2e2e2;
}

.swatches {
    display: flex;
    align-items: flex-start;
    flex: 1;
}

.swatch {
    width: 30px;
    height: 29px;
    border: 1px solid #c6c6c6;
    outline: 1px solid #fff;
    outline-offset: -2px;
    color: #fff;
    font-size: 15px;
    font-weight: 600;
}

.green {
    background: #268126;
}

.dark {
    background: #0b3a0b;
}

.olive {
    background: #808000;
}

.red {
    background: #e02f37;
}

.gallery-nav {
    display: flex;
    flex-direction: column;
    width: 22px;
    border-left: 1px solid #e2e2e2;
}

.gallery-nav button {
    display: flex;
    flex: 1;
    align-items: center;
    justify-content: center;
    border-bottom: 1px solid #e2e2e2;
}

.gallery-nav button:last-child {
    border-bottom: 0;
}

.group-foot {
    display: flex;
}

/* workspace */

.workspace {
    display: flex;
    flex: 1;
    min-height: 0;
    padding: 0 2px;
}

.center {
    display: flex;
    flex-direction: column;
    flex: 1;
    min-width: 0;
}

.documents {
    display: grid;
    grid-template-columns: 797fr 805fr;
    gap: 8px;
    flex: 1;
    min-height: 0;
    padding-right: 3px;
}

.document {
    display: flex;
    flex-direction: column;
    min-width: 0;
    min-height: 0;
}

.doc-tabs {
    display: flex;
    align-items: flex-end;
    justify-content: space-between;
    height: 31px;
    padding: 0 10px 0 5px;
}

.doc-tabs > .tool {
    height: 31px;
}

.doc-tab {
    display: flex;
    align-items: center;
    height: 30px;
    margin-bottom: -1px;
    padding: 0 8px 2px;
    border: 1px solid #c6c6c6;
    border-bottom: 0;
    background: #fff;
    z-index: 1;
}

.doc-tab a {
    margin: 0 17px 0 7px;
}

.doc-frame {
    display: flex;
    flex: 1;
    min-height: 0;
    padding: 3px 6px 6px 4px;
    border: 1px solid #c6c6c6;
    background: #fff;
}

.board {
    width: 100%;
    height: 100%;
    border: 1px solid #777;
    border-width: 1px 0 0 1px;
    background: #071a08;
    overflow: hidden;
}

.board text {
    fill: #fff;
    font-family: "Liberation Sans", sans-serif;
    font-size: 23px;
    text-anchor: middle;
    dominant-baseline: central;
}

.trace path {
    fill: none;
    stroke: #268126;
    stroke-opacity: 0.8;
    stroke-width: 27px;
}

.trace .round {
    stroke-linecap: round;
}

.ring {
    fill: none;
    stroke: #268126;
    stroke-opacity: 0.8;
    stroke-width: 26px;
}

.hole {
    fill: #0f3210;
}

.pad circle {
    fill: #ebab64;
    fill-opacity: 0.8;
}

.error {
    fill: none;
    stroke: #f00;
    stroke-width: 2px;
}

/* output panel */

.output {
    display: flex;
    flex-direction: column;
    height: 240px;
    padding-right: 3px;
    border-top: 6px solid #e6e6e6;
}

.panel-head {
    display: flex;
    align-items: center;
    justify-content: space-between;
    height: 48px;
    padding: 0 8px 0 4px;
}

.panel-head h2 {
    font-size: 26px;
    font-weight: normal;
    line-height: 36px;
}

.panel-buttons {
    display: flex;
    gap: 15px;
}

.output-body {
    display: flex;
    flex-direction: column;
    flex: 1;
    min-height: 0;
    padding: 2px 2px 1px;
    border: 1px solid #c6c6c6;
    background: #fafafa;
}

.toolbar {
    display: flex;
    align-items: center;
    gap: 9px;
    height: 29px;
    padding-left: 12px;
}

.toolbar label {
    display: flex;
    align-items: center;
    gap: 5px;
    white-space: nowrap;
}

.play {
    width: 14px;
}

.push {
    width: 60px;
    height: 21px;
    margin-right: 2px;
    border: 1px solid #c6c6c6;
    background: #fff;
}

.output-grid {
    display: flex;
    flex: 1;
    min-height: 0;
    padding: 2px 1px 1px;
    border: 1px solid #c6c6c6;
    background: #fff;
}

.grid-clip {
    flex: 1;
    min-width: 0;
    min-height: 0;
    overflow: hidden;
    background: #fafafa;
}

.grid {
    width: 100%;
    table-layout: fixed;
    border-spacing: 0;
    background: #fff;
}

.grid th,
.grid td {
    height: 23px;
    border: solid #c6c6c6;
    border-width: 0 1px 1px 0;
    padding-left: 5px;
    font-weight: normal;
    text-align: left;
    white-space: nowrap;
    overflow: hidden;
}

.grid thead th {
    height: 26px;
    border-bottom-color: #a9a9a9;
    background: #f0f0f0;
}

.grid tbody th {
    padding: 0;
    border-left: 1px solid #c6c6c6;
    background: #f0f0f0;
    text-align: center;
}

.grid tr:nth-child(even) td {
    background: #fafafa;
}

.parts tr:nth-child(even) td {
    background: #fff;
}

.parts tr:nth-child(odd) td {
    background: #fafafa;
}

.grid .num {
    padding: 0;
    text-align: center;
}

.grid .corner {
    border-left: 1px solid #c6c6c6;
}

.corner i {
    display: block;
    width: 16px;
    height: 17px;
    margin: 0 4px 0 auto;
    background: #c6c6c6;
    clip-path: polygon(100% 0, 100% 100%, 0 100%);
}

.grid .selected td,
.grid .selected th {
    background: #f9d0d2;
    color: #000;
}

.grid tbody .rest,
.grid tbody .selected .rest {
    border: 0;
    background: #fafafa;
}

.grid .rest {
    border-right: 0;
}

.c-row,
.c-num {
    width: 30px;
}

.c-name {
    width: 400px;
}

.c-pos {
    width: 200px;
}

.scroll-v {
    display: flex;
    flex-direction: column;
    width: 26px;
    border-left: 1px solid #fff;
    background: #f0f0f0;
}

.scroll-v button,
.scroll-h button {
    display: flex;
    align-items: center;
    justify-content: center;
    width: 25px;
    height: 26px;
}

.scroll-v button:last-child {
    margin-top: auto;
}

.scroll-v .thumb {
    height: 26px;
    background: #cdcdcd;
}

.output-tabs {
    display: flex;
    height: 20px;
    padding-left: 9px;
    line-height: 19px;
}

.output-tabs .active {
    display: flex;
    align-items: center;
    height: 20px;
    margin: -1px 0 1px 8px;
    padding: 0 2px 0 9px;
    border: 1px solid #c6c6c6;
    border-top: 0;
    background: #fff;
}

.output-tabs .tool {
    margin-left: 10px;
}

.splitter {
    width: 4px;
    background: #e6e6e6;
}

/* browser panel */

.browser {
    display: flex;
    flex-direction: column;
    width: 391px;
}

.browser .panel-head {
    height: 49px;
}

.browser-body {
    display: grid;
    grid-template-columns: 153px 1fr;
    gap: 6px;
    flex: 1;
    min-height: 0;
}

.tree-panel {
    display: flex;
    flex-direction: column;
    min-width: 0;
    min-height: 0;
    padding: 4px 0 5px;
    border: 1px solid #e6e6e6;
    background: #fff;
}

.tree {
    flex: 1;
    overflow: hidden;
    list-style: none;
}

.tree ul {
    margin-left: 12px;
    padding-left: 18px;
    border-left: 1px dotted #888;
    list-style: none;
}

.node,
.tree ul li,
.leaf {
    display: flex;
    align-items: center;
    height: 16px;
    white-space: nowrap;
}

.node {
    padding-left: 6px;
}

.node span {
    margin-left: 4px;
    padding: 0 2px;
}

.node .chosen {
    background: #e4e4e4;
    font-weight: 600;
}

.expander {
    width: 13px;
    height: 13px;
    border: 1px solid #999;
    border-radius: 2px;
    background: linear-gradient(#3a62b0, #3a62b0) center / 7px 1px no-repeat #fff;
}

.dots {
    width: 6px;
    border-top: 1px dotted #888;
}

.branch {
    flex: none;
    align-self: flex-start;
    width: 12px;
    height: 16px;
    margin-top: -8px;
    border: dotted #888;
    border-width: 0 0 1px 1px;
}

.tree ul svg {
    margin-right: 7px;
}

.leaf {
    padding-left: 12px;
}

.leaf svg {
    margin-right: 6px;
}

.scroll-h {
    display: flex;
    height: 25px;
    background: #f0f0f0;
}

.scroll-h .thumb {
    width: 138px;
    background: #cdcdcd;
}

.scroll-h button:last-child {
    margin-left: auto;
}

.boxed {
    background: #e6e6e6;
}

.boxed button,
.boxed .thumb {
    border: 1px solid #d8d8d8;
    background: #fafafa;
}

.boxed button {
    height: 25px;
}

.boxed .thumb {
    width: 68px;
}

.parts-panel {
    display: flex;
    flex-direction: column;
    min-width: 0;
    min-height: 0;
    padding: 3px 2px 2px 0;
    border-top: 1px solid #e6e6e6;
}

.parts-tabs {
    display: flex;
    height: 18px;
    line-height: 18px;
    text-align: center;
}

.parts-tabs a {
    width: 73px;
}

.parts-tabs .active {
    height: 19px;
    border: 1px solid #c6c6c6;
    border-bottom: 0;
    background: #fff;
    z-index: 1;
}

.parts-body {
    display: flex;
    flex-direction: column;
    flex: 1;
    min-height: 0;
    padding: 2px;
    border: 1px solid #c6c6c6;
    background: #fafafa;
}

.parts-body .toolbar {
    height: 31px;
    padding: 0 0 4px 8px;
}

.parts-grid {
    display: flex;
    flex-direction: column;
    flex: 1;
    min-height: 0;
    padding: 1px;
    border: 1px solid #c6c6c6;
    background: #fff;
}

.c-ref {
    width: 50px;
}

.c-value {
    width: 100px;
}

.c-pins {
    width: 35px;
}

.filters th svg {
    margin: auto;
}

.grid .filters th,
.grid .filters td {
    height: 25px;
    padding-right: 3px;
}

.filters div {
    display: flex;
    align-items: center;
    height: 22px;
}

.filters input {
    flex: 1;
    min-width: 0;
    padding-left: 3px;
}

.filters input::placeholder {
    color: #777;
}

/* right sidebar */

.sidebar {
    display: flex;
    flex-direction: column;
    width: 60px;
    background: #3c3c3c;
}

.sidebar a {
    display: flex;
    flex-direction: column;
    align-items: center;
    gap: 5px;
    height: 60px;
    padding-top: 9px;
    color: #ddd;
    font-family: "DejaVu Sans", sans-serif;
    font-size: 10px;
    font-weight: bold;
}

.sidebar svg {
    width: 24px;
    height: 24px;
    fill: none;
    stroke: #fff;
    stroke-width: 1.5;
}

.sidebar .active {
    background: #f00000;
    color: #fff;
}

/* status bar */

.status {
    display: flex;
    align-items: center;
    height: 36px;
    padding: 0 6px 0 3px;
    background: #d9191f;
    color: #fff;
}

.status span {
    display: flex;
    align-items: center;
    gap: 5px;
    white-space: nowrap;
}

.ready {
    flex: 1;
}

.via-name {
    width: 173px;
}

.layer-name {
    width: 177px;
}

.grid-size {
    width: 148px;
}

.abs {
    width: 175px;
}

.unit {
    width: 56px;
}

.fit-icon {
    margin-right: 14px;
}

.grip {
    margin-top: 16px;
}
```
